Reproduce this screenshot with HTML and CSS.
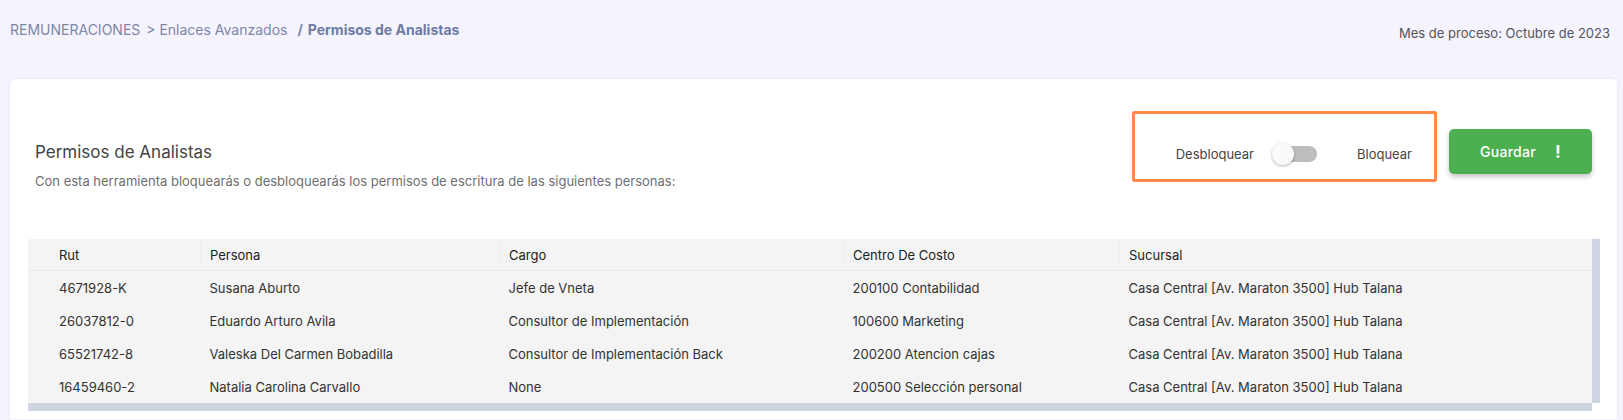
FILE: index.html
```html
<!DOCTYPE html>
<html>
    <head>
        <link rel="stylesheet" href="styles.css">
    </head>
    <body>
        <header class="topbar">
            <nav class="crumbs">
                <span>REMUNERACIONES</span>
                <span class="sep">&gt;</span>
                <span>Enlaces Avanzados</span>
                <span class="sep slash">/</span>
                <span class="current">Permisos de Analistas</span>
            </nav>
            <p class="period">Mes de proceso: Octubre de 2023</p>
        </header>

        <section class="card">
            <div class="cardHead">
                <div class="intro">
                    <h1>Permisos de Analistas</h1>
                    <p>Con esta herramienta bloquearás o desbloquearás los permisos de escritura de las siguientes personas:</p>
                </div>
                <div class="actions">
                    <div class="lockBox">
                        <span>Desbloquear</span>
                        <span class="switch"><span class="track"></span><span class="thumb"></span></span>
                        <span class="lockLabel">Bloquear</span>
                    </div>
                    <button class="save"><span>Guardar</span><span class="bang">!</span></button>
                </div>
            </div>

            <div class="tableWrap">
                <table class="grid">
                    <thead>
                        <tr><th>Rut</th><th>Persona</th><th>Cargo</th><th>Centro De Costo</th><th>Sucursal</th></tr>
                    </thead>
                    <tbody>
                        <tr><td>4671928-K</td><td>Susana Aburto</td><td>Jefe de Vneta</td><td>200100 Contabilidad</td><td>Casa Central [Av. Maraton 3500] Hub Talana</td></tr>
                        <tr><td>26037812-0</td><td>Eduardo Arturo Avila</td><td>Consultor de Implementación</td><td>100600 Marketing</td><td>Casa Central [Av. Maraton 3500] Hub Talana</td></tr>
                        <tr><td>65521742-8</td><td>Valeska Del Carmen Bobadilla</td><td>Consultor de Implementación Back</td><td>200200 Atencion cajas</td><td>Casa Central [Av. Maraton 3500] Hub Talana</td></tr>
                        <tr><td>16459460-2</td><td>Natalia Carolina Carvallo</td><td>None</td><td>200500 Selección personal</td><td>Casa Central [Av. Maraton 3500] Hub Talana</td></tr>
                    </tbody>
                </table>
                <div class="vbar"></div>
                <div class="hbar"></div>
                <div class="corner"></div>
            </div>
        </section>
    </body>
</html>
```

FILE: styles.css
```css
body{
    margin: 0;
    background: #f5f3fe;
    font-family: Inter, "Noto Sans", sans-serif;
    color: #333;
    overflow: hidden;
}
.topbar{
    display: flex;
    justify-content: space-between;
    height: 79px;
    padding: 0 13px 0 10px;
}
.crumbs{
    padding-top: 20px;
    font-size: 14px;
    line-height: 20px;
    color: #7c87a8;
}
.sep{
    margin: 0 0 0 2px;
}
.slash{
    margin: 0 1px 0 6px;
    font-weight: 700;
}
.current{
    font-weight: 700;
    color: #6c7ca3;
}
.period{
    margin: 0;
    padding-top: 24px;
    font-size: 13px;
    line-height: 18px;
    color: #555;
}

.card{
    margin: 0 6px 0 10px;
    background: white;
    border-radius: 6px 6px 0 0;
    box-shadow: 0 0 4px rgba(0,0,0,0.06);
    padding: 32px 17px 8px 18px;
}
.cardHead{
    display: flex;
    justify-content: space-between;
    align-items: flex-start;
    padding: 0 8px 0 7px;
}
.intro{
    padding-top: 30px;
}
.intro h1{
    margin: 0;
    font-size: 17px;
    font-weight: 400;
    line-height: 22px;
    color: #444;
}
.intro p{
    margin: 9px 0 0 0;
    font-size: 13px;
    line-height: 18px;
    color: #6f6f6f;
}
.actions{
    display: flex;
    align-items: flex-start;
    gap: 12px;
}
.lockBox{
    display: flex;
    align-items: center;
    border: 3px solid #ff8a4c;
    border-radius: 2px;
    padding: 30px 22px 15px 41px;
    height: 20px;
    font-size: 13px;
    color: #444;
}
.switch{
    position: relative;
    width: 45px;
    height: 22px;
    margin: 0 40px 0 18px;
}
.track{
    display: block;
    margin: 3px 0 0 4px;
    width: 41px;
    height: 16px;
    border-radius: 8px;
    background: #bdbdbd;
}
.thumb{
    position: absolute;
    left: 0;
    top: 0;
    width: 22px;
    height: 22px;
    border-radius: 50%;
    background: #fafafa;
    box-shadow: 0 1px 3px rgba(0,0,0,0.3);
}
.save{
    margin-top: 18px;
    width: 143px;
    height: 45px;
    display: flex;
    justify-content: center;
    align-items: center;
    gap: 19px;
    border: 0;
    border-radius: 5px;
    background: #4caf50;
    color: white;
    font-family: Inter, sans-serif;
    font-size: 14px;
    font-weight: 500;
    letter-spacing: 0.3px;
    box-shadow: 0 3px 5px rgba(0,0,0,0.22);
}
.bang{
    font-size: 17px;
    font-weight: 700;
}

.tableWrap{
    margin-top: 49px;
    display: grid;
    grid-template-columns: 1fr 8px;
    grid-template-rows: auto 8px;
}
.grid{
    border-collapse: collapse;
    width: 100%;
    background: #f4f4f4;
    font-size: 13px;
    table-layout: fixed;
}
.grid th, .grid td{
    text-align: left;
    padding: 0 0 0 9px;
    white-space: nowrap;
}
.grid th{
    font-weight: 400;
    color: #222;
    height: 31px;
    border-bottom: 1px solid #e9e9e9;
    border-left: 1px solid #efefef;
}
.grid td{
    height: 33px;
    color: #333;
}
.grid th:first-child, .grid td:first-child{
    padding-left: 31px;
    border-left: 0;
}
.grid th:nth-child(1){ width: 141px; }
.grid th:nth-child(2){ width: 289px; }
.grid th:nth-child(3){ width: 334px; }
.grid th:nth-child(4){ width: 266px; }
.vbar, .hbar{
    background: #cfd5e3;
}
.corner{
    background: white;
}
```
